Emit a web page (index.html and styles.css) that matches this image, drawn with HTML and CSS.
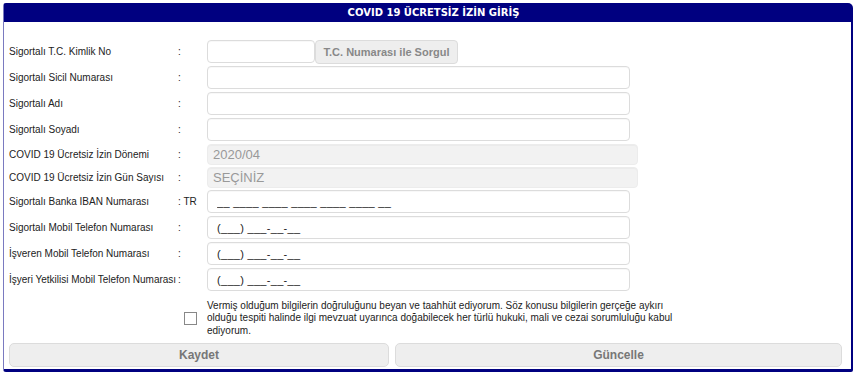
FILE: index.html
```html
<!DOCTYPE html>
<html lang="tr">

<head>
  <meta charset="UTF-8">
  <meta name="viewport" content="width=device-width, initial-scale=1.0">
  <title>COVID 19 Ücretsiz İzin Giriş</title>
  <link rel="stylesheet" href="styles.css">
</head>

<body>

  <div class="panel">
    <div class="panel-title">COVID 19 ÜCRETSİZ İZİN GİRİŞ</div>

    <div class="form">
      <div class="row">
        <label for="tcNo">Sigortalı T.C. Kimlik No</label>
        <span class="colon">:</span>
        <div class="field">
          <input type="text" id="tcNo" class="input short" />
          <button class="btn-query">T.C. Numarası ile Sorgul</button>
        </div>
      </div>
      <div class="row">
        <label for="sicilNo">Sigortalı Sicil Numarası</label>
        <span class="colon">:</span>
        <div class="field"><input type="text" id="sicilNo" class="input" /></div>
      </div>
      <div class="row">
        <label for="ad">Sigortalı Adı</label>
        <span class="colon">:</span>
        <div class="field"><input type="text" id="ad" class="input" /></div>
      </div>
      <div class="row">
        <label for="soyad">Sigortalı Soyadı</label>
        <span class="colon">:</span>
        <div class="field"><input type="text" id="soyad" class="input" /></div>
      </div>
      <div class="row row-small">
        <label for="donem">COVID 19 Ücretsiz İzin Dönemi</label>
        <span class="colon">:</span>
        <div class="field"><input type="text" id="donem" class="input disabled" value="2020/04" disabled /></div>
      </div>
      <div class="row row-small">
        <label for="gun">COVID 19 Ücretsiz İzin Gün Sayısı</label>
        <span class="colon">:</span>
        <div class="field"><input type="text" id="gun" class="input disabled" value="SEÇİNİZ" disabled /></div>
      </div>
      <div class="row">
        <label for="iban">Sigortalı Banka IBAN Numarası</label>
        <span class="colon">: TR</span>
        <div class="field"><input type="text" id="iban" class="input mask" value="__ ____ ____ ____ ____ ____ __" /></div>
      </div>
      <div class="row">
        <label for="tel1">Sigortalı Mobil Telefon Numarası</label>
        <span class="colon">:</span>
        <div class="field"><input type="text" id="tel1" class="input mask" value="(___) ___-__-__" /></div>
      </div>
      <div class="row">
        <label for="tel2">İşveren Mobil Telefon Numarası</label>
        <span class="colon">:</span>
        <div class="field"><input type="text" id="tel2" class="input mask" value="(___) ___-__-__" /></div>
      </div>
      <div class="row">
        <label for="tel3">İşyeri Yetkilisi Mobil Telefon Numarası</label>
        <span class="colon">:</span>
        <div class="field"><input type="text" id="tel3" class="input mask" value="(___) ___-__-__" /></div>
      </div>

      <div class="agree">
        <input type="checkbox" id="agree" class="check" />
        <label for="agree" class="agree-text">Vermiş olduğum bilgilerin doğruluğunu beyan ve taahhüt ediyorum. Söz konusu bilgilerin gerçeğe aykırı olduğu tespiti halinde ilgi mevzuat uyarınca doğabilecek her türlü hukuki, mali ve cezai sorumluluğu kabul ediyorum.</label>
      </div>

      <div class="actions">
        <button class="btn btn-save">Kaydet</button>
        <button class="btn btn-update">Güncelle</button>
      </div>
    </div>
  </div>

</body>

</html>
```

FILE: styles.css
```css
body {
  margin: 0;
  padding: 3px 0 0 3px;
  background-color: white;
  font-family: "Liberation Sans", Arial, sans-serif;
  font-size: 10px;
  color: #222;
}

.panel {
  width: 847px;
  height: 365px;
  border-left: 1px solid #7a7ac0;
  border-top: 1px solid #000080;
  border-right: 2px solid #000080;
  border-bottom: 3px solid #000080;
  border-radius: 3px 5px 2px 3px;
  box-sizing: content-box;
}

.panel-title {
  height: 18px;
  line-height: 18px;
  background-color: #000080;
  color: white;
  font-family: "DejaVu Sans", Verdana, sans-serif;
  font-size: 10px;
  font-weight: bold;
  text-align: center;
  padding-left: 12px;
}

.form {
  padding: 16.5px 8px 0 5px;
}

.row {
  display: flex;
  align-items: center;
  height: 26px;
}

.row-small {
  height: 23px;
}

.row label {
  width: 169px;
}

.colon {
  width: 29px;
}

.field {
  display: flex;
  align-items: center;
}

.input {
  box-sizing: border-box;
  width: 423px;
  height: 23px;
  border: 1px solid #dcdcdc;
  border-radius: 4px;
  background-color: white;
  padding: 0 8px;
  font-family: "Liberation Sans", Arial, sans-serif;
  font-size: 11px;
  color: #222;
  box-shadow: inset 0 1px 1px rgba(0, 0, 0, 0.03);
}

.input.short {
  width: 108px;
}

.input.disabled {
  width: 431px;
  height: 21px;
  background-color: #f2f2f2;
  border-color: #ececec;
  color: #999;
  font-size: 13px;
  padding: 0 5px;
}

.input.mask {
  padding-left: 9px;
  letter-spacing: 0.3px;
}

.btn-query {
  height: 24px;
  width: 143px;
  padding: 0;
  white-space: nowrap;
  background-color: #eeeeee;
  border: 1px solid #dcdcdc;
  border-radius: 4px;
  color: #888;
  font-family: "Liberation Sans", Arial, sans-serif;
  font-size: 11px;
  font-weight: bold;
  cursor: pointer;
}

.agree {
  display: flex;
  align-items: center;
  margin-top: 7px;
}

.check {
  width: 13px;
  height: 13px;
  margin: 0 10px 0 175px;
  appearance: none;
  border: 1px solid #888;
  background-color: white;
}

.agree-text {
  width: 472px;
  line-height: 12.7px;
  font-size: 10px;
  color: #222;
}

.actions {
  display: flex;
  gap: 6px;
  margin-top: 5px;
}

.btn {
  height: 24px;
  background-color: #eeeeee;
  border: 1px solid #dcdcdc;
  border-radius: 5px;
  color: #777;
  font-family: "Liberation Sans", Arial, sans-serif;
  font-size: 12px;
  font-weight: bold;
  cursor: pointer;
}

.btn-save {
  width: 380px;
}

.btn-update {
  width: 447px;
}
```
